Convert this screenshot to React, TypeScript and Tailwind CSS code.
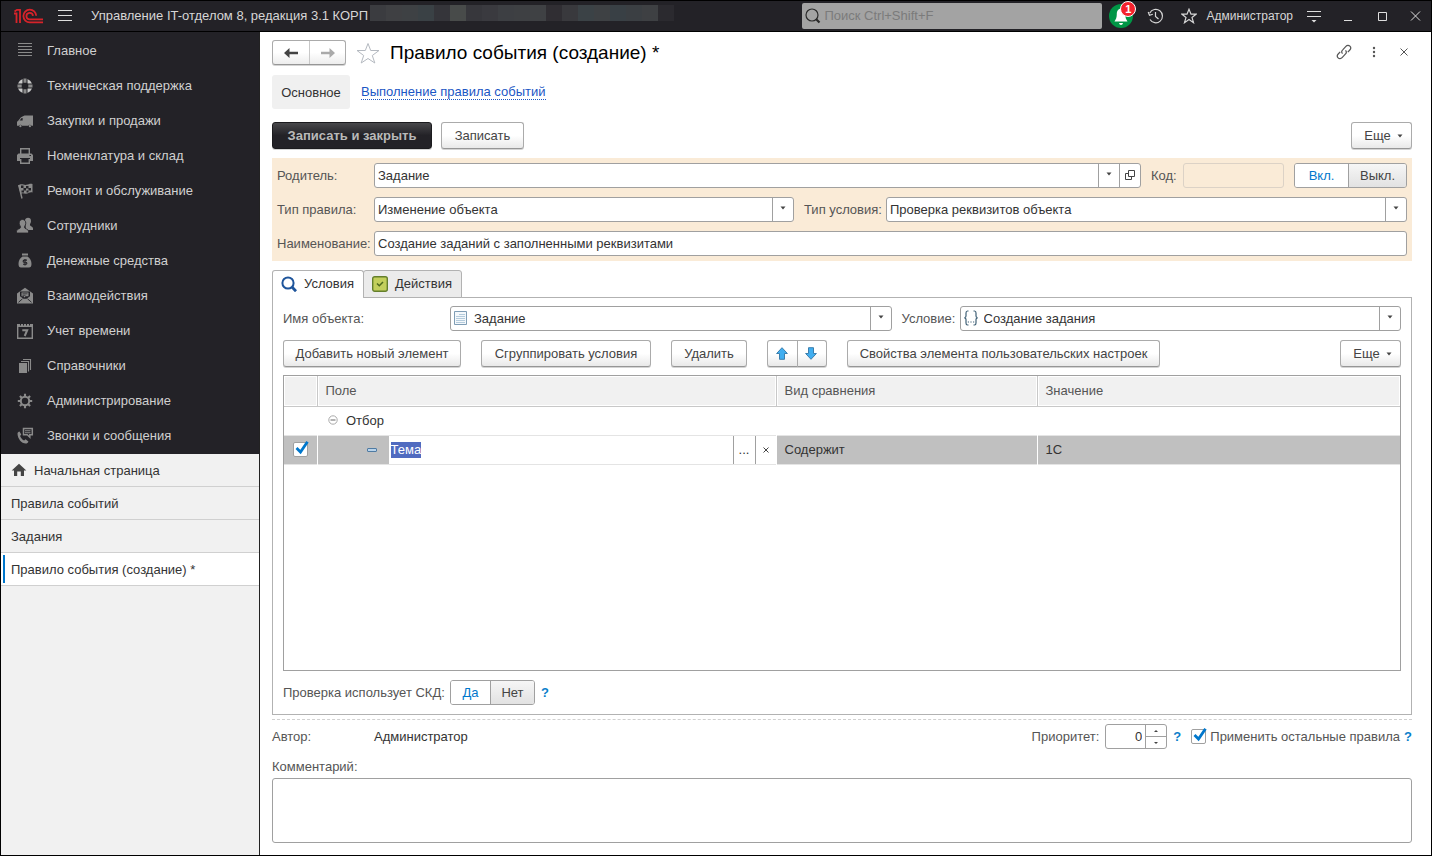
import { useEffect, useRef, useState } from 'react';
import type { ReactNode } from 'react';
import clsx from 'clsx';

/* ---------- section icons ---------- */

const sectionIcons: Record<string, ReactNode> = {
  main: <path d="M2 1.500h14M2 4.500h14M2 7.500h14M2 10.500h14M2 13.500h14" stroke="currentColor" fill="none" />,
  support: (
    <>
      <circle cx="9" cy="9" r="5.300" fill="none" stroke="#c9c9c9" strokeWidth="4" />
      <path d="M9 1v5.700M9 11.300v5.700M1 9h5.700M11.300 9h5.700" stroke="#232227" strokeWidth="5" />
      <path d="M9 1.500v4.200M9 12.300v4.200M1.500 9h4.200M12.300 9h4.200" stroke="#8a8a8a" strokeWidth="3" />
      <circle cx="9" cy="9" r="3" fill="#232227" />
    </>
  ),
  truck: (
    <>
      <path d="M8.500 3.500H17v10.200h-1.500a1.900 1.900 0 0 0-3.200 0H6a1.900 1.900 0 0 0-3.200 0H1V9.800l1-.8 3-3.800z" fill="currentColor" />
      <path d="M3.600 8.600l2-2.500h1v2.500z" fill="#232227" />
      <circle cx="4.400" cy="14.200" r="1.100" fill="currentColor" />
      <circle cx="13.900" cy="14.200" r="1.100" fill="currentColor" />
    </>
  ),
  printer: (
    <>
      <path d="M4.700 7V1.700h8.600V7" fill="none" stroke="currentColor" strokeWidth="1.400" />
      <path d="M2.500 6.500h13L17 8v6h-3v-3H4v3H1V8z" fill="currentColor" />
      <path d="M4.700 12v4.300h8.600V12" fill="none" stroke="currentColor" strokeWidth="1.400" />
      <path d="M13.500 8.500h1.500" stroke="#232227" />
    </>
  ),
  flag: (
    <>
      <path d="M2.700 3l3.300 13.500" stroke="currentColor" strokeWidth="1.400" />
      <path d="M2.500 3.500C5 .8 8 3.500 10.500 2.800 13 2.200 14 1.200 16.500 2v8.500c-3-.8-4 1.200-6.500 1.200-2.200 0-3.500-1-5.500.3z" fill="currentColor" />
      <path d="M5 3.500h2.500v2.500H5zM10 4h2.500v2.500H10zM7.500 6h2.500v2.500H7.500zM12.500 6H15v2.500h-2.500zM5.500 8.500H8v2H5.500zM10.500 8.500h2v2h-2z" fill="#232227" />
    </>
  ),
  people: (
    <>
      <path d="M9 3.500C9 1.500 10.500.7 12 .7c1.900 0 3 1.200 3 3.200 0 1.300-.5 2.300-1 3v1.400c0 .8 3 1.400 3 3V13H10z" fill="currentColor" />
      <path d="M3.200 6.200C3.200 4 4.500 2.500 6.500 2.500S9.800 4 9.800 6.200c0 1.300-.6 2.400-1.200 3.100v1.500c0 1 3.900 1.300 3.900 3.300V16H.5v-1.900c0-2 3.900-2.300 3.900-3.300V9.300c-.6-.7-1.200-1.800-1.200-3.100z" fill="currentColor" stroke="#232227" strokeWidth=".8" />
    </>
  ),
  money: (
    <>
      <path d="M6 1.500h6v2H6zM6.500 4.500h5c2.800 1.800 4 4.300 4 7.500 0 2.500-1 3.500-2.500 3.500H5c-1.500 0-2.500-1-2.500-3.500 0-3.200 1.200-5.700 4-7.500z" fill="currentColor" />
      <path d="M11 8.100H8.200a1 1 0 0 0 0 2.100h1.600a1 1 0 0 1 0 2.100H7M9 7v6.500" fill="none" stroke="#232227" strokeWidth="1.100" />
    </>
  ),
  mail: (
    <>
      <path d="M1 6.500L9 .8l8 5.700v10H1z" fill="currentColor" />
      <path d="M4 4.500h10v4.800l-3.500 2.500h-3L4 9.300z" fill="#232227" />
      <path d="M5.500 5.500h7v3.800H9.500L8 10.800V9.300H5.500z" fill="currentColor" />
      <path d="M6.500 6.800h5M6.500 8.300h3" stroke="#232227" strokeWidth=".7" />
      <path d="M2.500 15.300l4-3.500M15.500 15.300l-4-3.500" stroke="#232227" strokeWidth=".9" fill="none" />
    </>
  ),
  calendar: (
    <>
      <path d="M1.700 3h14.600v13.300H1.700z" fill="none" stroke="currentColor" strokeWidth="1.400" />
      <path d="M1 2h16v3H1z" fill="currentColor" />
      <path d="M4.500 0v3.500M7.500 0v3.500M10.500 0v3.500M13.500 0v3.500" stroke="#232227" />
      <path d="M6.300 8.200h4.900L8.700 14" fill="none" stroke="currentColor" strokeWidth="2" />
    </>
  ),
  books: (
    <>
      <path d="M3 6h8v10H3z" fill="currentColor" />
      <path d="M5 4.500h7.500v10M7 2.500h7.500v10.500" fill="none" stroke="currentColor" strokeWidth="1.100" />
    </>
  ),
  gear: (
    <>
      <circle cx="9" cy="9" r="4.200" fill="none" stroke="currentColor" strokeWidth="2" />
      <path d="M9 1.800v3M9 13.200v3M1.800 9h3M13.200 9h3M3.900 3.900L6 6M12 12l2.100 2.100M3.900 14.100L6 12M12 6l2.100-2.100" stroke="currentColor" strokeWidth="2.100" />
    </>
  ),
  phone: (
    <>
      <path d="M1.500 6.500c0-1 1-1.800 2-2l1.800 3-1.200 1.500c.6 1.800 2 3.500 4 4.500l1.500-1.200 2.800 2.200c-.4 1.500-1.500 2-2.600 2C5.500 16.500 1.500 11.500 1.500 6.500z" fill="currentColor" />
      <path d="M7.500 1.500h8.800v6.300h-2.500v2.400l-2.500-2.400H7.500z" fill="none" stroke="currentColor" strokeWidth="1.500" />
      <path d="M9 3.700h5.500M9 5.700h5.500" stroke="currentColor" strokeWidth="1.100" />
    </>
  ),
};

const sections = [
  { icon: 'main', label: 'Главное' },
  { icon: 'support', label: 'Техническая поддержка' },
  { icon: 'truck', label: 'Закупки и продажи' },
  { icon: 'printer', label: 'Номенклатура и склад' },
  { icon: 'flag', label: 'Ремонт и обслуживание' },
  { icon: 'people', label: 'Сотрудники' },
  { icon: 'money', label: 'Денежные средства' },
  { icon: 'mail', label: 'Взаимодействия' },
  { icon: 'calendar', label: 'Учет времени' },
  { icon: 'books', label: 'Справочники' },
  { icon: 'gear', label: 'Администрирование' },
  { icon: 'phone', label: 'Звонки и сообщения' },
];

const openPages = ['Правила событий', 'Задания', 'Правило события (создание) *'];

// Masked database name in the title bar
const maskTiles = [
  'bg-[#3b3c40]', 'bg-[#3f4043]', 'bg-[#3e4144]', 'bg-[#3a4145]', 'bg-[#35353a]', 'bg-[#484b4a]', 'bg-[#37373c]',
  'bg-[#3a3a3f]', 'bg-[#3d3f43]', 'bg-[#3e4043]', 'bg-[#3f4144]', 'bg-[#302e33]', 'bg-[#39393d]', 'bg-[#3b4246]',
  'bg-[#3e4144]', 'bg-[#394045]', 'bg-[#3b3f43]', 'bg-[#3e4043]', 'bg-[#2b2a2f]',
];

/* ---------- controls ---------- */

function Caret({ className }: { className?: string }) {
  return (
    <svg viewBox="0 0 6 4" className={clsx('h-1 w-1.5', className)} aria-hidden="true">
      <path d="M.5 .5h5L3 3.500z" fill="#444" />
    </svg>
  );
}

interface ButtonProps {
  children: ReactNode;
  className?: string;
}

function Button({ children, className }: ButtonProps) {
  return (
    <button
      type="button"
      className={clsx(
        'flex h-[27px] shrink-0 items-center justify-center rounded-[3px] border border-[#ababab] border-b-[#969696] bg-linear-to-b from-white from-50% to-[#e9e9e9] whitespace-nowrap text-[#444] shadow-[0_1px_0_#d4d4d4]',
        className,
      )}
    >
      {children}
    </button>
  );
}

interface ComboProps {
  id: string;
  value: string;
  icon?: ReactNode;
  open?: boolean;
}

function Combo({ id, value, icon, open }: ComboProps) {
  return (
    <div className="flex h-[25px] min-w-0 flex-1 rounded-[3px] border border-[#a0a0a0] bg-white">
      <div className="relative min-w-0 flex-1">
        {icon && <span className="pointer-events-none absolute top-0 left-[3px] flex h-full items-center">{icon}</span>}
        <select
          id={id}
          className={clsx('h-full w-full appearance-none bg-transparent pr-6 text-[#333] outline-none', icon ? 'pl-[23px]' : 'pl-[3px]')}
        >
          <option>{value}</option>
        </select>
        <span className="pointer-events-none absolute top-0 right-0 flex h-full w-[21px] items-center justify-center border-l border-[#a0a0a0]">
          <Caret className="mb-1" />
        </span>
      </div>
      {open && (
        <button type="button" aria-label="Открыть" className="flex w-[21px] items-center justify-center border-l border-[#a0a0a0]">
          <svg viewBox="0 0 10 10" className="mb-0.5 size-2.5" fill="none" stroke="#444" aria-hidden="true">
            <path d="M3.500 .5h6v6h-6zM3 3.500H.5v6h6V7" />
          </svg>
        </button>
      )}
    </div>
  );
}

interface SwitchProps {
  name: string;
  options: string[];
  widths: string[];
}

function Switch({ name, options, widths }: SwitchProps) {
  const [active, setActive] = useState(0);
  return (
    <div role="radiogroup" aria-label={name} className="flex h-[25px] shrink-0 overflow-hidden rounded-[3px] border border-[#a0a0a0]">
      {options.map((option, index) => (
        <label
          key={option}
          className={clsx(
            'flex items-center justify-center',
            widths[index],
            index > 0 && 'border-l border-[#a0a0a0]',
            active === index ? 'bg-white text-[#0077cc]' : 'bg-linear-to-b from-[#f6f6f6] to-[#e2e2e2] text-[#444]',
          )}
        >
          <input type="radio" name={name} className="sr-only" checked={active === index} onChange={() => setActive(index)} />
          {option}
        </label>
      ))}
    </div>
  );
}

function Checkbox({ id, label }: { id: string; label?: string }) {
  return (
    <span className="relative block size-[15px] shrink-0">
      <input
        id={id}
        type="checkbox"
        defaultChecked
        aria-label={label}
        className="peer block size-[15px] appearance-none rounded-[2px] border border-[#a0a0a0] bg-white"
      />
      <svg viewBox="0 0 17 17" className="pointer-events-none absolute -top-px left-0 hidden size-[17px] peer-checked:block" fill="none" aria-hidden="true">
        <path d="M3.500 7l4 4L14.500 .8" stroke="#0077cc" strokeWidth="2.800" />
      </svg>
    </span>
  );
}

function Help() {
  return (
    <button type="button" aria-label="Справка" className="leading-4 font-bold text-[#0b7fcb]">
      ?
    </button>
  );
}

function More() {
  return (
    <Button className="w-[61px] gap-1.5 pl-1">
      Еще
      <Caret />
    </Button>
  );
}

/* ---------- page parts ---------- */

function TitleBar() {
  return (
    <header className="flex h-[31px] items-center border-b border-black bg-[#232227] text-[#d6d6d6]">
      <svg viewBox="0 0 30 16" className="ml-3 h-4 w-[30px]" fill="none" stroke="#d8232a" strokeWidth="1.800" aria-label="1С">
        <path d="M1 5.500h2.500V15M1.500 3.500L4 1.800h3V15" />
        <path d="M23.200 7.800A6.400 6.400 0 1 0 16.800 14.400H30" />
        <path d="M20 7.800A3.300 3.300 0 1 0 16.800 11.400H30" />
      </svg>
      <button type="button" aria-label="Меню" className="ml-3.5">
        <svg viewBox="0 0 16 12" className="h-3 w-4" stroke="#dedede" aria-hidden="true">
          <path d="M1 .5h14M1 5.500h14M1 10.500h14" />
        </svg>
      </button>
      <span className="ml-[18px] whitespace-nowrap">Управление IT-отделом 8, редакция 3.1 КОРП</span>
      <div className="ml-0.5 flex h-5 self-start pt-1" aria-hidden="true">
        {maskTiles.map((tile, index) => (
          <span key={index} className={clsx('size-4', tile)} />
        ))}
      </div>
      <div className="ml-auto flex h-[26px] w-[300px] shrink-0 items-center rounded-[2px] bg-[#a3a3a3] pl-[3px]">
        <svg viewBox="0 0 16 16" className="size-4" fill="none" stroke="#2a2a2a" aria-hidden="true">
          <circle cx="7" cy="7" r="6" strokeWidth="1.200" />
          <path d="M11 11l3.500 3.500" strokeWidth="2.200" />
        </svg>
        <input
          type="search"
          aria-label="Поиск"
          placeholder="Поиск Ctrl+Shift+F"
          className="ml-[3px] min-w-0 flex-1 bg-transparent outline-none placeholder:text-[#7b7b7b]"
        />
      </div>
      <button type="button" aria-label="Оповещения" className="relative ml-[7px] size-6 rounded-full bg-[#009646]">
        <svg viewBox="0 0 24 24" className="size-6" fill="#fff" aria-hidden="true">
          <path d="M12 4.500c3.200.5 4.200 3 4.200 5.500 0 3.500.8 5 2.300 7.500h-13C7 15 7.800 13.500 7.800 10c0-2.500 1-5 4.200-5.500z" />
          <path d="M10 19h4c-.3 1.300-1 2-2 2s-1.700-.7-2-2z" />
        </svg>
        <span className="absolute -top-[3px] -right-[3px] flex size-4 items-center justify-center rounded-full border border-white bg-[#f5222d] text-[11px] font-bold text-white">
          1
        </span>
      </button>
      <button type="button" aria-label="История" className="ml-3.5">
        <svg viewBox="0 0 17 16" className="h-4 w-[17px]" fill="none" stroke="#d6d6d6" strokeWidth="1.200" aria-hidden="true">
          <path d="M2.800 5A6.700 6.700 0 1 1 3 11.500M1.200 4l1.300 3.300L5.800 6.200M8.500 4v4.500l3 2.500" />
        </svg>
      </button>
      <button type="button" aria-label="Избранное" className="ml-[17px]">
        <svg viewBox="0 0 16 16" className="size-4" fill="none" stroke="#d6d6d6" strokeWidth="1.200" aria-hidden="true">
          <path d="M8 1.200l2 5h5l-4 3.300 1.500 5.200L8 11.600l-4.500 3.100L5 9.500 1 6.200h5z" />
        </svg>
      </button>
      <button type="button" className="ml-[9px] text-xs">Администратор</button>
      <button type="button" aria-label="Настройки" className="ml-[13px]">
        <svg viewBox="0 0 16 14" className="h-3.5 w-4" fill="none" stroke="#dedede" aria-hidden="true">
          <path d="M1 2.500h14M1 7.500h14" />
          <path d="M5.500 11h5L8 13.500z" fill="#dedede" stroke="none" />
        </svg>
      </button>
      <button type="button" aria-label="Свернуть" className="ml-[18px]">
        <svg viewBox="0 0 16 12" className="h-3 w-4" stroke="#dedede" aria-hidden="true">
          <path d="M4 10.500h8" />
        </svg>
      </button>
      <button type="button" aria-label="Развернуть" className="ml-[19px]">
        <svg viewBox="0 0 16 12" className="h-3 w-4" fill="none" stroke="#dedede" aria-hidden="true">
          <path d="M3.500 2.500h8v8h-8z" />
        </svg>
      </button>
      <button type="button" aria-label="Закрыть" className="mr-2 ml-4">
        <svg viewBox="0 0 16 12" className="h-3 w-4" stroke="#dedede" aria-hidden="true">
          <path d="M4 1.500l9 9M13 1.500l-9 9" />
        </svg>
      </button>
    </header>
  );
}

function Sidebar() {
  return (
    <aside className="w-[259px] shrink-0 border-r border-[#222] bg-[#f1f1f1]">
      <nav className="bg-[#232227] pt-px pb-px text-[#d0d0d0]">
        {sections.map((section) => (
          <a key={section.label} href="#" className="flex h-[35px] items-center pl-[15px]">
            <svg viewBox="0 0 18 18" className="size-[18px] shrink-0 text-[#8a8a8a]" aria-hidden="true">
              {sectionIcons[section.icon]}
            </svg>
            <span className="ml-[13px]">{section.label}</span>
          </a>
        ))}
      </nav>
      <nav className="text-[#333]">
        <a href="#" className="flex h-[33px] items-center gap-[7px] border-b border-[#d0d0d0] pt-0.5 pl-2.5">
          <svg viewBox="0 0 16 14" className="mb-0.5 h-3.5 w-4" fill="#444" aria-hidden="true">
            <path d="M8 .8l7.300 6.700h-2.300V13H9.800V8.500H6.200V13H3V7.500H.7z" />
          </svg>
          Начальная страница
        </a>
        {openPages.map((page, index) => (
          <a
            key={page}
            href="#"
            className={clsx('flex h-[33px] items-center border-b border-[#d0d0d0] py-0.5 pl-0.5', index === 2 && 'bg-white')}
          >
            <span className={clsx('flex h-full items-center border-l-2 pt-0.5 pl-1.5', index === 2 ? 'border-[#0077cc]' : 'border-transparent')}>
              {page}
            </span>
          </a>
        ))}
      </nav>
    </aside>
  );
}

function FormHeader() {
  return (
    <div className="flex items-center">
      <div className="flex h-[25px] rounded-[3px] border border-[#ababab] border-b-[#969696] bg-linear-to-b from-white from-50% to-[#ededed] shadow-[0_1px_0_#d4d4d4]">
        <button type="button" aria-label="Назад" className="flex w-9 items-center justify-center">
          <svg viewBox="0 0 14 12" className="h-3 w-3.5" aria-hidden="true">
            <path d="M0 6l5.500-5v3.700H14v2.600H5.500V11z" fill="#444" />
          </svg>
        </button>
        <button type="button" aria-label="Вперед" className="flex w-9 items-center justify-center border-l border-[#c8c8c8]">
          <svg viewBox="0 0 14 12" className="h-3 w-3.5" aria-hidden="true">
            <path d="M14 6L8.500 1v3.700H0v2.600h8.500V11z" fill="#aaa" />
          </svg>
        </button>
      </div>
      <button type="button" aria-label="В избранное" className="ml-2.5">
        <svg viewBox="0 0 24 22" className="h-[22px] w-6" fill="none" stroke="#b4b9c0" aria-hidden="true">
          <path d="M12 1.500l2.700 7h8.300l-6.700 5 2.500 7.500-6.800-4.500L5.200 21l2.500-7.500L1 8.500h8.300z" />
        </svg>
      </button>
      <h1 className="ml-2.5 text-[19px] leading-6 text-black">Правило события (создание) *</h1>
      <button type="button" aria-label="Ссылка" className="ml-auto">
        <svg viewBox="0 0 16 16" className="mb-0.5 size-4" fill="none" stroke="#555" strokeWidth="1.200" aria-hidden="true">
          <path d="M6.500 9.700C5.400 8.500 5.500 7 6.700 5.800l3.200-3.500c1.200-1.300 2.900-1.300 4-.2s1 2.700-.1 3.900l-2 2.200" />
          <path d="M9.500 6.300c1.100 1.200 1 2.700-.2 3.900l-3.200 3.500c-1.200 1.300-2.900 1.300-4 .2s-1-2.700.1-3.900l2-2.200" />
        </svg>
      </button>
      <button type="button" aria-label="Действия формы" className="ml-5">
        <svg viewBox="0 0 4 12" className="mb-0.5 h-3 w-1" fill="#555" aria-hidden="true">
          <circle cx="2" cy="2" r="1.200" />
          <circle cx="2" cy="6" r="1.200" />
          <circle cx="2" cy="10" r="1.200" />
        </svg>
      </button>
      <button type="button" aria-label="Закрыть форму" className="mr-1 ml-6">
        <svg viewBox="0 0 8 8" className="mb-0.5 size-2" stroke="#555" aria-hidden="true">
          <path d="M.5 .5l7 7M7.500 .5l-7 7" />
        </svg>
      </button>
    </div>
  );
}

function RuleFields() {
  return (
    <div className="mt-[9px] flex flex-col gap-[9px] bg-[#faebd7] p-[5px] text-[#555]">
      <div className="flex items-center">
        <label htmlFor="parent" className="w-[97px]">Родитель:</label>
        <Combo id="parent" value="Задание" open />
        <label htmlFor="code" className="ml-2.5 w-8">Код:</label>
        <input id="code" readOnly className="h-[25px] w-[101px] rounded-[3px] border border-[#dcd2c6] bg-transparent" />
        <div className="ml-2.5">
          <Switch name="Состояние" options={['Вкл.', 'Выкл.']} widths={['w-[53px]', 'w-[58px]']} />
        </div>
      </div>
      <div className="flex items-center">
        <label htmlFor="rule-type" className="w-[97px]">Тип правила:</label>
        <div className="flex flex-[420]">
          <Combo id="rule-type" value="Изменение объекта" />
        </div>
        <label htmlFor="condition-type" className="ml-2.5 w-[82px] whitespace-nowrap">Тип условия:</label>
        <div className="flex flex-[521]">
          <Combo id="condition-type" value="Проверка реквизитов объекта" />
        </div>
      </div>
      <div className="flex items-center">
        <label htmlFor="name" className="w-[97px]">Наименование:</label>
        <input
          id="name"
          defaultValue="Создание заданий с заполненными реквизитами"
          className="h-[25px] min-w-0 flex-1 rounded-[3px] border border-[#a0a0a0] bg-white px-[3px] text-[#333]"
        />
      </div>
    </div>
  );
}

function FilterTable() {
  const fieldRef = useRef<HTMLInputElement>(null);

  // The cell being edited opens with its whole value selected
  useEffect(() => {
    fieldRef.current?.focus();
    fieldRef.current?.select();
  }, []);

  return (
    <div className="mt-2 min-h-40 flex-1 border border-[#a0a0a0]">
      <table className="w-full table-fixed border-collapse text-left text-[#333]">
        <colgroup>
          <col className="w-[33px]" />
          <col />
          <col className="w-[261px]" />
          <col className="w-[363px]" />
        </colgroup>
        <thead>
          <tr className="h-[30px] border-b border-[#c8c8c8] bg-[#f1f1f1] text-[#555]">
            <th className="border-r border-[#c8c8c8] shadow-[inset_0_0_0_1px_#fff]" />
            <th className="border-r border-[#c8c8c8] px-2 font-normal shadow-[inset_0_0_0_1px_#fff]">Поле</th>
            <th className="border-r border-[#c8c8c8] px-2 font-normal shadow-[inset_0_0_0_1px_#fff]">Вид сравнения</th>
            <th className="px-2 font-normal shadow-[inset_0_0_0_1px_#fff]">Значение</th>
          </tr>
        </thead>
        <tbody>
          <tr className="h-[29px] border-b border-[#e4e4e4]">
            <td />
            <td colSpan={3} className="pl-[11px]">
              <span className="flex items-center gap-2">
                <svg viewBox="0 0 10 10" className="mb-0.5 size-2.5" fill="none" stroke="#aaa" aria-hidden="true">
                  <circle cx="5" cy="5" r="4.200" />
                  <path d="M2.500 5h5" stroke="#666" />
                </svg>
                Отбор
              </span>
            </td>
          </tr>
          <tr className="h-[29px] border-b border-[#e4e4e4] bg-[#c0c0c0]">
            <td className="border-r border-white pl-[9px]">
              <Checkbox id="use-row" label="Использование" />
            </td>
            <td className="border-r border-white p-0">
              <div className="flex h-7 items-center">
                <span className="flex w-[71px] shrink-0 justify-end pr-3">
                  <svg viewBox="0 0 10 4" className="h-1 w-2.5" aria-hidden="true">
                    <rect x=".5" y=".5" width="9" height="3" rx=".5" fill="#b9d3ea" stroke="#4f7ba3" />
                  </svg>
                </span>
                <div className="flex h-full min-w-0 flex-1 items-center bg-white">
                  <input
                    ref={fieldRef}
                    aria-label="Поле"
                    defaultValue="Тема"
                    className="h-4 min-w-0 flex-1 px-0.5 leading-4 caret-transparent outline-none selection:bg-[#506bc0] selection:text-white"
                  />
                  <button type="button" aria-label="Выбрать" className="h-full w-[22px] border-l border-[#a0a0a0]">...</button>
                  <button type="button" aria-label="Очистить" className="flex h-full w-[21px] items-center justify-center border-l border-[#a0a0a0]">
                    <svg viewBox="0 0 6 6" className="size-1.5" stroke="#444" aria-hidden="true">
                      <path d="M.5 .5l5 5M5.500 .5l-5 5" />
                    </svg>
                  </button>
                </div>
              </div>
            </td>
            <td className="border-r border-white px-2">Содержит</td>
            <td className="px-2">1С</td>
          </tr>
        </tbody>
      </table>
    </div>
  );
}

function ConditionsPanel() {
  return (
    <>
      <div role="tablist" className="relative z-10 -mb-px mt-[9px] flex h-7 text-[#333]">
        <button
          type="button"
          role="tab"
          aria-selected="true"
          className="flex w-[92px] items-center gap-[7px] rounded-t-[3px] border border-b-0 border-[#b2b2b2] bg-white pb-0.5 pl-2"
        >
          <svg viewBox="0 0 16 16" className="size-4" fill="none" stroke="#1f559b" aria-hidden="true">
            <circle cx="7" cy="7" r="5.600" strokeWidth="2" />
            <path d="M11 11l4 4.300" strokeWidth="2.800" />
          </svg>
          Условия
        </button>
        <button
          type="button"
          role="tab"
          aria-selected="false"
          className="-ml-px flex w-[99px] items-center gap-[7px] rounded-t-[3px] border border-[#b2b2b2] bg-[#ebebeb] pl-2"
        >
          <svg viewBox="0 0 16 16" className="size-4" aria-hidden="true">
            <rect x=".7" y=".7" width="14.600" height="14.600" rx="2" fill="#c3cf5c" stroke="#647f2b" strokeWidth="1.400" />
            <path d="M5 7.500l2.300 2.300L11 6" fill="none" stroke="#4f6a1e" strokeWidth="1.500" />
          </svg>
          Действия
        </button>
      </div>
      <section className="flex flex-1 flex-col border border-[#b2b2b2] px-2.5 pt-2 pb-[9px]">
        <div className="flex items-center text-[#555]">
          <label htmlFor="object-name" className="w-[167px]">Имя объекта:</label>
          <Combo
            id="object-name"
            value="Задание"
            icon={
              <svg viewBox="0 0 13 14" className="mb-0.5 h-3.5 w-[13px]" fill="none" aria-hidden="true">
                <path d="M.5 .5h12v13H.5z" fill="#f4f8fb" stroke="#7f9db5" />
                <path d="M5 3.500h6M2 5.500h9M2 7.500h9M2 9.500h9M2 11.500h9" stroke="#b4cbdc" />
              </svg>
            }
          />
          <label htmlFor="condition" className="ml-2.5 w-[58px]">Условие:</label>
          <Combo
            id="condition"
            value="Создание задания"
            icon={
              <svg viewBox="0 0 14 16" className="mb-0.5 h-4 w-3.5" fill="none" stroke="#3f6076" strokeWidth="1.200" aria-hidden="true">
                <path d="M4.500 1H3.500C2 1 2 2 2 3v3c0 1-.5 1.500-1.500 1.800C1.500 8 2 8.500 2 9.500V13c0 1 0 2 1.500 2h1M9.500 1h1C12 1 12 2 12 3v3c0 1 .5 1.500 1.500 1.800-1 .2-1.500.7-1.500 1.700V13c0 1 0 2-1.500 2h-1" />
                <path d="M3.800 12h1.200M6.400 12h1.200M9 12h1.200" />
              </svg>
            }
          />
        </div>
        <div className="mt-[9px] flex items-center gap-5">
          <Button className="w-[178px]">Добавить новый элемент</Button>
          <Button className="w-[170px]">Сгруппировать условия</Button>
          <Button className="w-[76px]">Удалить</Button>
          <div className="flex">
            <Button className="w-[31px] rounded-r-none pr-0.5">
              <svg viewBox="0 0 12 13" className="mb-px h-[13px] w-3" aria-label="Вверх">
                <path d="M6 .7l5.400 5.800H8.500v5.800h-5V6.500H.6z" fill="#41aef0" stroke="#3b7fae" />
              </svg>
            </Button>
            <Button className="-ml-px w-[30px] rounded-l-none pr-0.5">
              <svg viewBox="0 0 12 13" className="mb-px h-[13px] w-3" aria-label="Вниз">
                <path d="M6 12.300l5.400-5.800H8.500V.7h-5v5.800H.6z" fill="#41aef0" stroke="#3b7fae" />
              </svg>
            </Button>
          </div>
          <Button className="w-[313px]">Свойства элемента пользовательских настроек</Button>
          <div className="ml-auto">
            <More />
          </div>
        </div>
        <FilterTable />
        <div className="mt-[9px] flex items-center text-[#555]">
          <span className="w-[167px] whitespace-nowrap">Проверка использует СКД:</span>
          <Switch name="Проверка использует СКД" options={['Да', 'Нет']} widths={['w-[39px]', 'w-11']} />
          <span className="ml-1.5 flex">
            <Help />
          </span>
        </div>
      </section>
    </>
  );
}

function FormFooter() {
  return (
    <footer className="mt-1 border-t border-dashed border-[#d0d0d0] pt-1 text-[#555]">
      <div className="flex items-center">
        <span className="w-[102px]">Автор:</span>
        <span className="text-[#333]">Администратор</span>
        <label htmlFor="priority" className="ml-auto pr-1.5">Приоритет:</label>
        <div className="flex h-[25px] w-[62px] overflow-hidden rounded-[3px] border border-[#a0a0a0]">
          <input id="priority" defaultValue="0" inputMode="numeric" className="min-w-0 flex-1 pr-[3px] text-right text-[#333]" />
          <div className="flex w-[21px] flex-col border-l border-[#a0a0a0]">
            <button type="button" aria-label="Увеличить" className="flex flex-1 items-center justify-center border-b border-[#a0a0a0]">
              <svg viewBox="0 0 4 2" className="h-0.5 w-1" aria-hidden="true"><path d="M0 2h4L2 0z" fill="#444" /></svg>
            </button>
            <button type="button" aria-label="Уменьшить" className="flex flex-1 items-center justify-center">
              <svg viewBox="0 0 4 2" className="h-0.5 w-1" aria-hidden="true"><path d="M0 0h4L2 2z" fill="#444" /></svg>
            </button>
          </div>
        </div>
        <span className="mr-2.5 ml-1.5 flex">
          <Help />
        </span>
        <Checkbox id="apply-rest" />
        <label htmlFor="apply-rest" className="mx-1">Применить остальные правила</label>
        <Help />
      </div>
      <label htmlFor="comment" className="mt-[9px] block leading-[18px]">Комментарий:</label>
      <textarea id="comment" className="mt-0.5 block h-[65px] w-full resize-none rounded-[3px] border border-[#a0a0a0] p-1" />
    </footer>
  );
}

export default function App() {
  return (
    <div className="flex min-h-screen flex-col border border-black bg-white font-['Liberation_Sans',Arial,sans-serif] text-[13px]">
      <TitleBar />
      <div className="flex flex-1">
        <Sidebar />
        <main className="flex min-w-0 flex-1 flex-col pt-2 pr-[19px] pb-3 pl-3">
          <FormHeader />
          <div className="mt-2.5 flex items-center">
            <a href="#" className="flex h-[34px] w-[78px] items-center justify-center rounded-[3px] bg-[#f0f0f0] pt-0.5 text-[#333]">Основное</a>
            <a href="#" className="ml-[11px] border-b border-dotted border-[#1a56c4] pt-px leading-[14px] text-[#1a56c4]">Выполнение правила событий</a>
          </div>
          <div className="mt-[13px] flex items-center">
            <button
              type="button"
              className="h-[27px] w-40 rounded-[3px] border border-[#1b1b1e] bg-linear-to-b from-[#48484b] to-[#232227] to-50% font-bold whitespace-nowrap text-[#b9b9b9] shadow-[0_1px_0_#d4d4d4]"
            >
              Записать и закрыть
            </button>
            <Button className="ml-[9px] w-[83px]">Записать</Button>
            <div className="ml-auto">
              <More />
            </div>
          </div>
          <RuleFields />
          <ConditionsPanel />
          <FormFooter />
        </main>
      </div>
    </div>
  );
}
